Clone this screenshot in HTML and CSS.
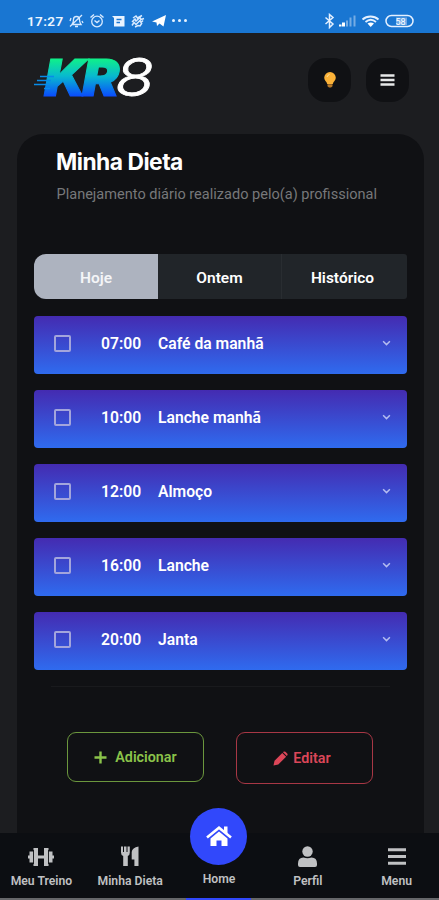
FILE: index.html
```html
<!DOCTYPE html>
<html lang="pt-BR">
<head>
    <meta charset="UTF-8">
    <meta name="viewport" content="width=device-width, initial-scale=1.0">
    <title>Minha Dieta - KR8</title>
    <link rel="stylesheet" href="styles.css">
</head>
<body>
    <div class="status-bar">
        <span class="clock">17:27</span>
        <svg class="status-left" width="120" height="16" viewBox="0 0 120 16" fill="none" stroke="#d8eaff" stroke-width="1.3">
            <!-- muted bell -->
            <path d="M4 11.500h9c-1.500-2-1.500-3-1.500-5a3 3 0 0 0-6 0c0 2 0 3-1.500 5zM7 13.500h3M2 13.500L14 2M2 8l1-3M14 8l1 2"/>
            <!-- alarm -->
            <circle cx="29" cy="8.500" r="5.300"/>
            <path d="M26.500 7.500l2.500 2 2.500-2M22.500 4.500l3.500-3M35.500 4.500L32 1.500" stroke-width="1.500"/>
            <!-- message -->
            <path d="M44 3h12.500v10.500H46V5z" fill="#e8f3ff" stroke="none"/>
            <path d="M48.500 6.500h5M48.500 9.500h3.500" stroke="#1976d2"/>
            <!-- vibrate -->
            <path d="M65 5l3-2 1.500 2L74 2.500M64 9l3-3 1 2 4-3.500 1 2 3-1M64 12.500l2-3 2 2 4-4 1 2 2-2M67 14l3-1.500 2 .5 2-3" stroke-width="1.500"/>
            <!-- telegram -->
            <path d="M84 8.500L98 2l-2.500 11.500-4-3-2.500 2.500-.500-3.500z" fill="#fff" stroke="none"/>
            <g fill="#e8f3ff" stroke="none"><circle cx="105.500" cy="7.500" r="1.500"/><circle cx="111.500" cy="7.500" r="1.500"/><circle cx="117.500" cy="7.500" r="1.500"/></g>
        </svg>
        <svg class="status-right" width="92" height="16" viewBox="0 0 92 16" fill="none" stroke="#e4f0ff" stroke-width="1.500">
            <path d="M1.500 4.500l7.500 6.500-3.500 3.500v-13L9 4.500l-7.500 6.500"/>
            <g stroke="none" fill="#fff"><path d="M15 13.500v-2h2.500v2zM18 13.500V9.500h3v4z"/><path d="M22 13.500V7.500h2v6zM25.500 13.500v-9h2v9zM29.500 13.500v-11h2v11z" opacity=".4"/></g>
            <path d="M38.500 6.500c4.500-4 11.500-4 16 0M41.500 9c3.500-3 7-3 10.500 0" stroke-width="1.800"/>
            <path d="M43.500 10.500q3.200-2 6.500 0l-3.300 3.500z" fill="#fff" stroke="none"/>
            <rect x="62" y="2.500" width="27" height="11" rx="5.500"/>
            <rect x="72" y="4.500" width="11" height="7.500" fill="#6ea9e6" stroke="none"/>
            <text x="71.500" y="11.500" class="battery-text">58</text>
        </svg>
    </div>

    <header class="header">
        <svg class="logo" width="130" height="60" viewBox="0 0 130 60">
            <defs>
                <linearGradient id="logoGradient" x1="0" y1="5" x2="0" y2="43" gradientUnits="userSpaceOnUse">
                    <stop offset="0" stop-color="#0ff08a"/>
                    <stop offset=".45" stop-color="#08b9cf"/>
                    <stop offset="1" stop-color="#0a48ff"/>
                </linearGradient>
            </defs>
            <text class="logo-kr" x="10" y="42" textLength="71" lengthAdjust="spacingAndGlyphs" fill="url(#logoGradient)" stroke="url(#logoGradient)">KR</text>
            <path d="M6 22.500h14M3 26.500h14M0 30.500h15M10 34.500h6" stroke="#078ce8" stroke-width="1.600"/>
            <text class="logo-8" x="81" y="42" textLength="39" lengthAdjust="spacingAndGlyphs">8</text>
        </svg>
        <div class="header-actions">
            <button class="round-btn" aria-label="Dicas">
                <svg width="14" height="18" viewBox="0 0 14 18">
                    <path d="M7 1a5.800 5.800 0 0 0-5.800 5.800c0 2.700 2.500 3.700 3 6.200h5.600c.500-2.500 3-3.500 3-6.200A5.800 5.800 0 0 0 7 1z" fill="#fbb238"/>
                    <path d="M4.500 13.300h5v2l-1.500 1.200H6l-1.500-1.200z" fill="#b97a28"/>
                    <path d="M4 6q.500-2 2.500-2.500" stroke="#ffe09a" fill="none"/>
                </svg>
            </button>
            <button class="round-btn" aria-label="Menu">
                <svg width="15" height="12" viewBox="0 0 15 12"><path d="M.5 1.500h14M.5 6h14M.5 10.500h14" stroke="#e6e8e8" stroke-width="2.700"/></svg>
            </button>
        </div>
    </header>

    <main class="card">
        <h1>Minha Dieta</h1>
        <p class="subtitle">Planejamento diário realizado pelo(a) profissional</p>

        <div class="tabs">
            <button class="tab active">Hoje</button>
            <button class="tab">Ontem</button>
            <button class="tab">Histórico</button>
        </div>

        <div class="meals">
            <div class="meal"><span class="check"></span><span class="time">07:00</span><span class="name">Café da manhã</span><svg class="chevron" viewBox="0 0 8 6"><path d="M1 1l3 3 3-3"/></svg></div>
            <div class="meal"><span class="check"></span><span class="time">10:00</span><span class="name">Lanche manhã</span><svg class="chevron" viewBox="0 0 8 6"><path d="M1 1l3 3 3-3"/></svg></div>
            <div class="meal"><span class="check"></span><span class="time">12:00</span><span class="name">Almoço</span><svg class="chevron" viewBox="0 0 8 6"><path d="M1 1l3 3 3-3"/></svg></div>
            <div class="meal"><span class="check"></span><span class="time">16:00</span><span class="name">Lanche</span><svg class="chevron" viewBox="0 0 8 6"><path d="M1 1l3 3 3-3"/></svg></div>
            <div class="meal"><span class="check"></span><span class="time">20:00</span><span class="name">Janta</span><svg class="chevron" viewBox="0 0 8 6"><path d="M1 1l3 3 3-3"/></svg></div>
        </div>

        <hr>

        <div class="actions">
            <button class="btn btn-add">
                <svg width="13" height="13" viewBox="0 0 13 13"><path d="M6.500 .5v12M.5 6.500h12" stroke="currentColor" stroke-width="2.400"/></svg>
                Adicionar
            </button>
            <button class="btn btn-edit">
                <svg width="15" height="15" viewBox="0 0 15 15" fill="currentColor"><path d="M.5 14.500l1-4.800L9.300 1.900l3.800 3.800-7.800 7.800zM10 1.200l.400-.400q1-.8 2 0l1.800 1.800q.8 1 0 2l-.4.400z"/></svg>
                Editar
            </button>
        </div>
    </main>

    <nav class="bottom-nav">
        <a class="nav-item">
            <svg width="26" height="20" viewBox="0 0 26 20" fill="currentColor"><path d="M0 8.500h1.500v-4H5.500V1h4.500v7.500h6V1h4.500v3.500h4v4H26v3h-1.500v4h-4V19H16v-7.500h-6V19H5.500v-3.500h-4v-4H0z"/><path d="M5.500 3v14M20.500 3v14" stroke="#0c0e12" stroke-width=".9"/></svg>
            <span>Meu Treino</span>
        </a>
        <a class="nav-item">
            <svg width="18" height="21" viewBox="0 0 18 21" fill="currentColor"><path d="M0 .5h2v5.500h1V.5h2.500V6h1V.5H8.800v6q0 2.800-2 3.500V20H2.200V10Q0 9.300 0 6.500zM17.500.5V20H13.400v-6.500H10.700V6q.5-4.500 6.800-5.500z"/></svg>
            <span>Minha Dieta</span>
        </a>
        <a class="nav-item home">
            <span class="home-circle">
                <svg width="26" height="21" viewBox="0 0 26 21"><path d="M1 11.500L13 1.700l12 9.800" fill="none" stroke="#fff" stroke-width="2.600"/><path d="M18 .5h3.500v8L18 5.500z" fill="#fff"/><path d="M4.500 12.500L13 5.500l8.500 7V20h-6v-5.500h-5V20h-6z" fill="#fff"/></svg>
            </span>
            <span>Home</span>
        </a>
        <a class="nav-item">
            <svg width="19" height="21" viewBox="0 0 19 21" fill="currentColor"><circle cx="9.500" cy="5.500" r="5.200"/><path d="M0 21v-3.500Q0 11.700 5.500 11.500q4 1.600 8 0 5.500.2 5.500 6V19q0 2-2 2H2q-2 0-2-2z"/></svg>
            <span>Perfil</span>
        </a>
        <a class="nav-item">
            <svg class="bars" width="18" height="17" viewBox="0 0 18 17"><path d="M0 1.700h18M0 8.500h18M0 15.300h18" stroke="currentColor" stroke-width="3"/></svg>
            <span>Menu</span>
        </a>
    </nav>
</body>
</html>
```
FILE: styles.css
```css
:root {
  --bg: #1c1d20;
  --card-bg: #101114;
  --nav-bg: #0c0e12;
  --blue: #3148fb;
  --green: #8bc34a;
  --red: #dc4658;
}

* {
  box-sizing: border-box;
  margin: 0;
  padding: 0;
}

body {
  width: 439px;
  height: 900px;
  display: flex;
  flex-direction: column;
  overflow: hidden;
  background: var(--bg);
  font-family: Roboto, "Liberation Sans", sans-serif;
  color: #fff;
}

button {
  font-family: inherit;
  border: none;
}

.status-bar {
  height: 33px;
  flex: none;
  display: flex;
  align-items: center;
  padding: 8px 23px 0 27px;
  background: #1976d2;
}

.clock {
  width: 41px;
  font-size: 13.5px;
  font-weight: 600;
  letter-spacing: 0.4px;
  color: #eef6ff;
}

.status-right {
  margin-left: auto;
}

.battery-text {
  font-size: 9px;
  fill: #fff;
  stroke: none;
}

.header {
  height: 101px;
  flex: none;
  display: flex;
  justify-content: space-between;
  padding: 21px 30px 0 34px;
}

.logo {
  overflow: visible;
}

.logo-kr {
  font: italic 900 51px Inter, sans-serif;
  letter-spacing: -4px;
  stroke-width: 1px;
}

.logo-8 {
  font: italic 300 52px Inter, sans-serif;
  fill: #fff;
  stroke: #fff;
  stroke-width: 0.8px;
}

.header-actions {
  display: flex;
  gap: 15px;
  padding-top: 4px;
}

.round-btn {
  width: 43px;
  height: 44px;
  display: flex;
  align-items: center;
  justify-content: center;
  border-radius: 18px;
  background: #101114;
}

.card {
  flex: 1;
  min-height: 0;
  margin: 0 15px 0 17px;
  padding: 14px 17px 0;
  border-radius: 26px 26px 0 0;
  background: var(--card-bg);
}

h1 {
  padding-left: 22px;
  font: 700 22.8px/27px Inter, sans-serif;
  letter-spacing: -0.5px;
}

.subtitle {
  margin-top: 11px;
  padding-left: 22.5px;
  font-size: 14.55px;
  line-height: 18px;
  color: #77787a;
  white-space: nowrap;
}

.tabs {
  height: 45px;
  margin-top: 50px;
  display: flex;
  border-radius: 12px 3px 3px 12px;
  overflow: hidden;
}

.tab {
  width: 124px;
  padding-top: 3px;
  border-right: 1px solid #292d31;
  background: #212529;
  color: #fff;
  font-size: 15.5px;
  font-weight: 600;
}

.tab:last-child {
  flex: 1;
  padding-right: 4px;
  border-right: none;
}

.tab.active {
  border-right: none;
  background: #adb3bf;
  color: #f4f5f7;
}

.meals {
  margin-top: 17px;
  display: flex;
  flex-direction: column;
  gap: 16px;
}

.meal {
  height: 58px;
  display: flex;
  align-items: center;
  padding: 0 16px 3px 20px;
  border-radius: 4px;
  background: linear-gradient(#442bb1, #2f6bef);
  font-size: 15.7px;
  font-weight: 600;
}

.check {
  width: 17px;
  height: 17px;
  border: 2px solid #a3a5dc;
  border-radius: 2px;
}

.time {
  width: 57px;
  margin-left: 30px;
}

.chevron {
  width: 9px;
  height: 7px;
  margin-left: auto;
  fill: none;
  stroke: #b4bcf0;
  stroke-width: 1.3;
}

hr {
  margin: 16px 17px 0;
  border: none;
  border-top: 1px solid #191a1d;
}

.actions {
  display: flex;
  gap: 32px;
  margin: 45px 0 0 33px;
  align-items: flex-start;
}

.btn {
  width: 137px;
  height: 50px;
  display: flex;
  align-items: center;
  justify-content: center;
  gap: 8px;
  border: 1px solid;
  border-radius: 9px;
  background: none;
  font-size: 14.3px;
  font-weight: 600;
}

.btn-add {
  color: var(--green);
  border-color: #6b973d;
}

.btn-edit {
  height: 52px;
  gap: 5px;
  padding-right: 5px;
  color: var(--red);
  border-color: #a83745;
}

.bottom-nav {
  width: 444px;
  height: 67px;
  flex: none;
  margin-left: -3px;
  display: grid;
  grid-template-columns: repeat(5, 1fr);
  background: var(--nav-bg);
  border-bottom: 2px solid #66676a;
}

.nav-item {
  height: 67px;
  display: flex;
  flex-direction: column;
  align-items: center;
  justify-content: flex-end;
  padding-bottom: 12px;
  color: #c0c1c3;
  font-size: 12.2px;
  font-weight: 600;
  line-height: 14px;
  white-space: nowrap;
}

.nav-item svg {
  margin-bottom: 7px;
}

.nav-item .bars {
  margin-bottom: 9px;
}

.home {
  width: 65px;
  padding-bottom: 12px;
  justify-self: center;
  border-bottom: 2px solid var(--blue);
}

/* floating circle that rises above the bar */
.home-circle {
  width: 57px;
  height: 57px;
  flex: none;
  display: flex;
  align-items: center;
  justify-content: center;
  margin-bottom: 7px;
  border-radius: 50%;
  background: var(--blue);
}

.home-circle svg {
  margin: 0;
}
```
